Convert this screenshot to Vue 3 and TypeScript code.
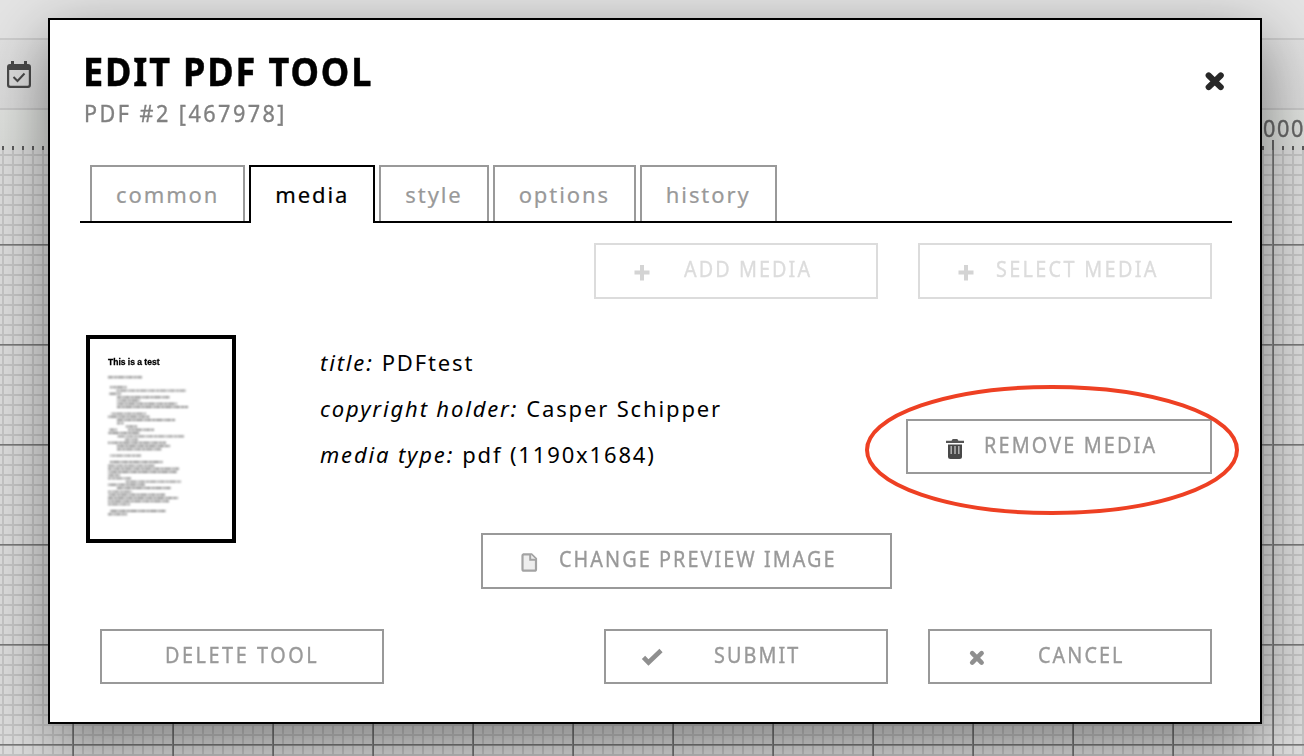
<script setup lang="ts">
type IconName = 'plus' | 'trash' | 'page' | 'check' | 'cross'

interface Action {
  id: string
  label: string
  icon?: IconName
  faded?: boolean
}

interface Detail {
  name: string
  value: string
}

const tabs: string[] = ['common', 'media', 'style', 'options', 'history']
const activeTab = 'media'

const mediaActions: Action[] = [
  { id: 'add', label: 'ADD MEDIA', icon: 'plus', faded: true },
  { id: 'select', label: 'SELECT MEDIA', icon: 'plus', faded: true },
]
const removeActions: Action[] = [{ id: 'remove', label: 'REMOVE MEDIA', icon: 'trash' }]
const previewActions: Action[] = [{ id: 'preview', label: 'CHANGE PREVIEW IMAGE', icon: 'page' }]
const footerActions: Action[] = [
  { id: 'delete', label: 'DELETE TOOL' },
  { id: 'submit', label: 'SUBMIT', icon: 'check' },
  { id: 'cancel', label: 'CANCEL', icon: 'cross' },
]
const rows = [
  { id: 'top', actions: mediaActions },
  { id: 'remove-row', actions: removeActions },
  { id: 'preview-row', actions: previewActions },
  { id: 'footer', actions: footerActions },
]

const details: Detail[] = [
  { name: 'title:', value: 'PDFtest' },
  { name: 'copyright holder:', value: 'Casper Schipper' },
  { name: 'media type:', value: 'pdf (1190x1684)' },
]

// Greeked text of the page preview: x, y, width
const lines: number[][] = [
  [18, 38.3, 34], [20, 48.3, 17], [26.5, 51.6, 69], [19, 54.8, 12], [27, 58.2, 53], [27, 61.5, 23],
  [27, 64.8, 60], [27, 68, 71], [21, 74.6, 35], [18, 77.8, 42], [27, 81, 58], [27, 84.3, 7],
  [35, 87.5, 12], [19, 90.8, 8], [38, 90.8, 26], [18, 94, 32], [27, 97.4, 67], [35, 100.6, 13],
  [18, 103.7, 58], [27, 107, 53], [27, 110.2, 45], [20, 116.6, 31], [20, 123, 53], [18, 126.6, 47],
  [18, 129.8, 71], [18, 133, 69], [18, 136.2, 12], [18, 139.4, 23], [35, 142.6, 56], [18, 145.8, 37],
  [27, 149, 54], [18, 152.6, 24], [18, 155.8, 57], [18, 159, 70], [18, 162.2, 61], [18, 165.4, 22],
  [20, 172, 56], [18, 175.2, 19],
]
</script>

<template>
  <div class="screen">
    <div class="topbar"></div>
    <div class="toolbar">
      <svg class="calendar" viewBox="0 0 24 27">
        <path d="M4 0h3v3h10V0h3v3h1q3 0 3 3v18q0 3-3 3H3q-3 0-3-3V6q0-3 3-3h1zM2.200 9v14.500q0 1.300 1.300 1.300h17q1.300 0 1.300-1.300V9z" fill="#4a4a4a" fill-rule="evenodd" />
        <path d="M6.500 16l4 4 7-7.500" fill="none" stroke="#4a4a4a" stroke-width="2" />
      </svg>
    </div>
    <div class="ruler"><span>000</span></div>
    <div class="grid"></div>

    <section class="modal">
      <header>
        <div>
          <h1>EDIT PDF TOOL</h1>
          <p>PDF #2 [467978]</p>
        </div>
        <svg class="close" viewBox="0 0 18 18">
          <path d="M3.500 3.300l11.400 11M14.900 3.300L3.500 14.300" stroke="#282828" stroke-width="5.800" stroke-linecap="round" />
        </svg>
      </header>

      <nav>
        <span v-for="tab in tabs" :key="tab" class="tab" :class="{ active: tab === activeTab }">{{ tab }}</span>
      </nav>

      <div class="thumb">
        <svg viewBox="0 0 142 200">
          <text x="18" y="25.500" class="doc-title">This is a test</text>
          <g class="greek">
            <path v-for="(l, i) in lines" :key="i" :d="`M${l[0]} ${l[1]}h${l[2]}`" :stroke-dashoffset="i * 3" />
          </g>
        </svg>
      </div>

      <dl>
        <div v-for="d in details" :key="d.name">
          <dt>{{ d.name }}</dt>
          <dd>{{ d.value }}</dd>
        </div>
      </dl>

      <div v-for="row in rows" :key="row.id" class="row" :class="row.id">
        <button v-for="a in row.actions" :key="a.id" :class="[a.id, { faded: a.faded }]">
          <svg v-if="a.icon" class="icon" viewBox="0 0 24 24">
            <path v-if="a.icon === 'plus'" d="M10 5h4v5.500h5.500v4H14v6h-4v-6H4.500v-4H10z" fill="#d4d4d4" />
            <g v-else-if="a.icon === 'trash'">
              <path d="M4 4.800h5.500l1.200-1.800h4.600l1.200 1.800H22v2.200H4z" fill="#555" />
              <path d="M6 8.500h14v12q0 2.500-2.500 2.500h-9q-2.500 0-2.500-2.500z" fill="#484848" />
              <path d="M9.200 10v8M13 10v8M16.800 10v8" stroke="#b4b4b4" stroke-width="1.500" />
            </g>
            <g v-else-if="a.icon === 'page'">
              <path d="M6 4.300h8.500l4.500 4.500v10.400q0 1.500-1.500 1.500h-10.500q-1.500 0-1.500-1.500v-13.400q0-1.500 1.500-1.500z" fill="#eee" stroke="#a3a3a3" stroke-width="2.200" />
              <path d="M13.200 4v5.800h6" fill="#eee" stroke="#a3a3a3" stroke-width="2" />
            </g>
            <path v-else-if="a.icon === 'check'" d="M3.500 11.300l5 5.200L21 4.500" fill="none" stroke="#8f8f8f" stroke-width="4.600" />
            <path v-else d="M8.200 7.200l9.400 9.400M17.600 7.200l-9.400 9.400" stroke="#8f8f8f" stroke-width="4.600" stroke-linecap="round" />
          </svg>
          <span>{{ a.label }}</span>
        </button>
      </div>
    </section>

    <svg class="marker" viewBox="0 0 374 130">
      <ellipse cx="187" cy="65" rx="185" ry="63" fill="none" stroke="#ee4023" stroke-width="4" />
    </svg>
  </div>
</template>

<style>
body {
  margin: 0;
  overflow: hidden;
}
</style>

<style scoped>
.screen {
  position: relative;
  width: 1304px;
  height: 756px;
  overflow: hidden;
  box-sizing: border-box;
  background: #dfdfdf;
  font-family: "Noto Sans", "Open Sans", sans-serif;
}
.topbar {
  height: 38px;
  background: #e4e4e4;
  border-bottom: 2px solid #cdcdcd;
}
.toolbar {
  height: 68px;
  background: linear-gradient(#e0e0e0, #dadada);
  border-bottom: 2px solid #c8c8c8;
}
.calendar {
  display: block;
  width: 24px;
  height: 27px;
  padding: 21px 0 0 7px;
}
.ruler {
  height: 40px;
  background:
    linear-gradient(#666, #666) 1272px 30px / 2px 10px no-repeat,
    repeating-linear-gradient(90deg, transparent 0 1.500px, #5c5c5c 2px 4px, transparent 4.500px 10px) 0 36px / 100% 4px no-repeat,
    linear-gradient(#dfe1de, #dadcd9);
}
.ruler span {
  display: block;
  width: 60px;
  margin-left: 1263px;
  font-size: 24px;
  line-height: 35px;
  letter-spacing: 1.800px;
  color: #666;
  -webkit-text-stroke: 0.400px #666;
  transform: scaleX(0.9);
  transform-origin: 0 0;
}
.grid {
  height: 606px;
  background:
    repeating-linear-gradient(90deg, transparent 0 72px, #8c8c8c 72px 73px, #747474 73px 74px, transparent 74px 100px),
    repeating-linear-gradient(transparent 0 94px, #7a7a7a 94px 95px, #999 95px 96px, transparent 96px 100px),
    repeating-linear-gradient(90deg, transparent 0 1.700px, #c6c6c6 2px 4px, transparent 4.300px 10px),
    repeating-linear-gradient(transparent 0 3.700px, #c6c6c6 4px 6px, transparent 6.300px 10px),
    #dedede;
}
.modal {
  position: absolute;
  left: 48px;
  top: 18px;
  width: 1214px;
  height: 706px;
  box-sizing: border-box;
  border: 2px solid #000;
  background: #fff;
  box-shadow: 0 20px 60px rgba(0, 0, 0, 0.45);
  display: grid;
  grid-template-columns: 270px 1fr;
  grid-template-rows: 145px 58px 76px 98px 114px 96px 1fr;
}
header {
  grid-area: 1 / 1 / 2 / 3;
  display: flex;
  justify-content: space-between;
  padding: 26px 36px 0 33px;
}
h1,
p {
  margin: 0;
  transform: scaleX(0.9);
  transform-origin: 0 0;
  white-space: nowrap;
}
h1 {
  font-size: 40px;
  line-height: 50px;
  letter-spacing: 2.100px;
  -webkit-text-stroke: 0.500px #000;
}
p {
  padding-left: 1px;
  font-size: 24px;
  line-height: 34px;
  letter-spacing: 2.750px;
  color: #808080;
  -webkit-text-stroke: 0.350px #808080;
}
.close {
  width: 19px;
  height: 19px;
  margin-top: 26px;
}
nav {
  grid-area: 2 / 1 / 3 / 3;
  display: flex;
  gap: 4px;
  margin: 0 28px 0 30px;
  padding-left: 10px;
  border-bottom: 2px solid #000;
}
.tab {
  height: 54px;
  padding: 0 24px;
  border: 2px solid #999;
  border-bottom: 0;
  font-size: 22px;
  line-height: 54px;
  letter-spacing: 1.900px;
  color: #999;
  -webkit-text-stroke: 0.200px #999;
}
.tab.active {
  height: 56px;
  border-color: #000;
  background: #fff;
  color: #000;
  -webkit-text-stroke-color: #000;
}
.thumb {
  grid-area: 4 / 1 / 6 / 2;
  box-sizing: border-box;
  width: 150px;
  height: 208px;
  margin: 36px 0 0 36px;
  border: 4px solid #000;
}
.thumb svg {
  display: block;
  width: 142px;
  height: 200px;
}
.doc-title {
  font: bold 8.500px "Liberation Sans", sans-serif;
  filter: blur(0.700px);
  stroke: #000;
  stroke-width: 0.300px;
}
.greek path {
  fill: none;
  stroke: #8a8a8a;
  stroke-width: 1.900;
  stroke-dasharray: 5 0.800 3 0.600 7 0.900 2 0.500;
}
.greek {
  filter: blur(0.850px);
}
dl {
  grid-area: 4 / 2 / 5 / 3;
  margin: 40px 0 0;
  font-size: 22px;
  line-height: 46px;
  letter-spacing: 1.850px;
}
dl div {
  display: flex;
  gap: 8px;
}
dt {
  font-style: italic;
}
dd {
  margin: 0;
}
.row {
  display: flex;
  justify-content: flex-end;
  align-items: flex-start;
  gap: 40px;
  padding-right: 48px;
  grid-column: 1 / 3;
}
.top {
  grid-row: 3;
  padding-top: 20px;
}
.remove-row {
  grid-area: 4 / 2 / 5 / 3;
  justify-self: end;
  padding-top: 120px;
}
.preview-row {
  grid-row: 5;
  justify-content: flex-start;
  padding: 136px 0 0 431px;
}
.footer {
  grid-row: 6;
  padding-top: 118px;
}
button {
  box-sizing: border-box;
  display: flex;
  width: 284px;
  height: 55px;
  padding: 0;
  border: 2px solid #999;
  background: #fff;
  color: #999;
  font: 22px/47px "Noto Sans", "Open Sans", sans-serif;
  letter-spacing: 2.300px;
  white-space: nowrap;
  text-align: left;
}
button span {
  transform: scaleX(0.9);
  transform-origin: 0 0;
  -webkit-text-stroke: 0.350px currentColor;
}
.icon {
  flex: none;
  width: 24px;
  height: 24px;
  margin: 15px 0 0 34px;
}
.faded {
  border-color: #dcdcdc;
  color: #dcdcdc;
  height: 56px;
}
.add span {
  margin-left: 30px;
}
.select {
  width: 294px;
}
.select span {
  margin-left: 18px;
  letter-spacing: 2.600px;
}
.remove {
  width: 306px;
}
.remove span {
  margin-left: 18px;
  letter-spacing: 2.400px;
}
.preview {
  width: 411px;
  height: 56px;
}
.preview span {
  margin-left: 18px;
}
.delete {
  margin-right: 180px;
}
.delete span {
  margin-left: 63px;
  letter-spacing: 2.850px;
}
.submit span {
  margin-left: 50px;
}
.cancel span {
  margin-left: 50px;
}
.marker {
  position: absolute;
  left: 865px;
  top: 385px;
  width: 374px;
  height: 130px;
}
</style>
